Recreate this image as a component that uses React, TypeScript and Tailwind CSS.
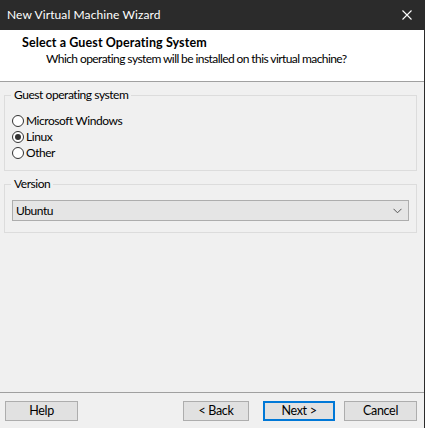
import { useState } from 'react'

const font = { fontFamily: 'Lato, "Liberation Sans", sans-serif' }

function Radio({ label, checked, onClick }: { label: string; checked: boolean; onClick: () => void }) {
  return (
    <div className="flex h-[16px] items-center cursor-default" onClick={onClick}>
      <span className="ml-[7px] flex h-[12px] w-[12px] items-center justify-center rounded-full border border-[#333333] bg-white">
        {checked && <span className="h-[6px] w-[6px] rounded-full bg-[#333333]" />}
      </span>
      <span className="ml-[2px]">{label}</span>
    </div>
  )
}

function Button({ children, w, primary }: { children: string; w: string; primary?: boolean }) {
  return (
    <button
      className={`h-[20px] ${w} bg-[#e1e1e1] text-[12.5px] leading-none tracking-[-0.3px] text-black ${
        primary ? 'border-2 border-[#0078d7]' : 'border border-[#adadad]'
      }`}
    >
      {children}
    </button>
  )
}

export default function App() {
  const [os, setOs] = useState('linux')

  return (
    <div
      className="flex h-[428px] w-[425px] flex-col overflow-hidden bg-[#f0f0f0] text-[12px] tracking-[-0.45px] text-black"
      style={font}
    >
      {/* title bar */}
      <div className="flex h-[30px] shrink-0 items-center justify-between bg-[#2b2b2b] pl-[7px] pr-[12px] text-white">
        <span className="text-[12px] tracking-[0.1px]">New Virtual Machine Wizard</span>
        <svg width="10" height="10" viewBox="0 0 10 10" className="mr-[1px]">
          <path d="M0.5 0.5 L9.5 9.5 M9.5 0.5 L0.5 9.5" stroke="white" strokeWidth="1.1" />
        </svg>
      </div>

      <div className="flex flex-1 flex-col border-r border-[#2b2b2b]">
        {/* header */}
        <div className="h-[52px] shrink-0 border-b border-[#a0a0a0] bg-white pl-[22px] pt-[5px] leading-[16px]">
          <div className="text-[12.5px] font-bold tracking-[0.1px]">Select a Guest Operating System</div>
          <div className="pl-[24px] tracking-[-0.58px]">
            Which operating system will be installed on this virtual machine?
          </div>
        </div>

        {/* body */}
        <div className="flex flex-1 flex-col px-[4px]">
          <fieldset className="mr-[3px] mt-[6px] border border-[#dcdcdc] p-0">
            <legend className="ml-[6px] px-[3px] leading-[14px]">Guest operating system</legend>
            <div className="mb-[9px] mt-[11px] flex flex-col">
              <Radio label="Microsoft Windows" checked={os === 'win'} onClick={() => setOs('win')} />
              <Radio label="Linux" checked={os === 'linux'} onClick={() => setOs('linux')} />
              <Radio label="Other" checked={os === 'other'} onClick={() => setOs('other')} />
            </div>
          </fieldset>

          <fieldset className="mr-[3px] mt-[6px] border border-[#dcdcdc] p-0">
            <legend className="ml-[6px] px-[3px] leading-[14px]">Version</legend>
            <div className="mx-[7px] mb-[11px] mt-[9px] flex h-[21px] items-center justify-between border border-[#adadad] bg-[#e5e5e5] pl-[3px] pr-[6px]">
              <span>Ubuntu</span>
              <svg width="9" height="6" viewBox="0 0 9 6">
                <path d="M0.5 0.8 L4.5 4.8 L8.5 0.8" fill="none" stroke="#555" strokeWidth="1" />
              </svg>
            </div>
          </fieldset>
        </div>

        {/* footer */}
        <div className="flex h-[36px] shrink-0 items-start border-t border-[#a0a0a0] pl-[5px] pt-[8px]">
          <Button w="w-[73px]">Help</Button>
          <div className="ml-[105px]">
            <Button w="w-[66px]">&lt; Back</Button>
          </div>
          <div className="ml-[14px]">
            <Button w="w-[72px]" primary>
              Next &gt;
            </Button>
          </div>
          <div className="ml-[9px]">
            <Button w="w-[73px]">Cancel</Button>
          </div>
        </div>
      </div>
    </div>
  )
}
